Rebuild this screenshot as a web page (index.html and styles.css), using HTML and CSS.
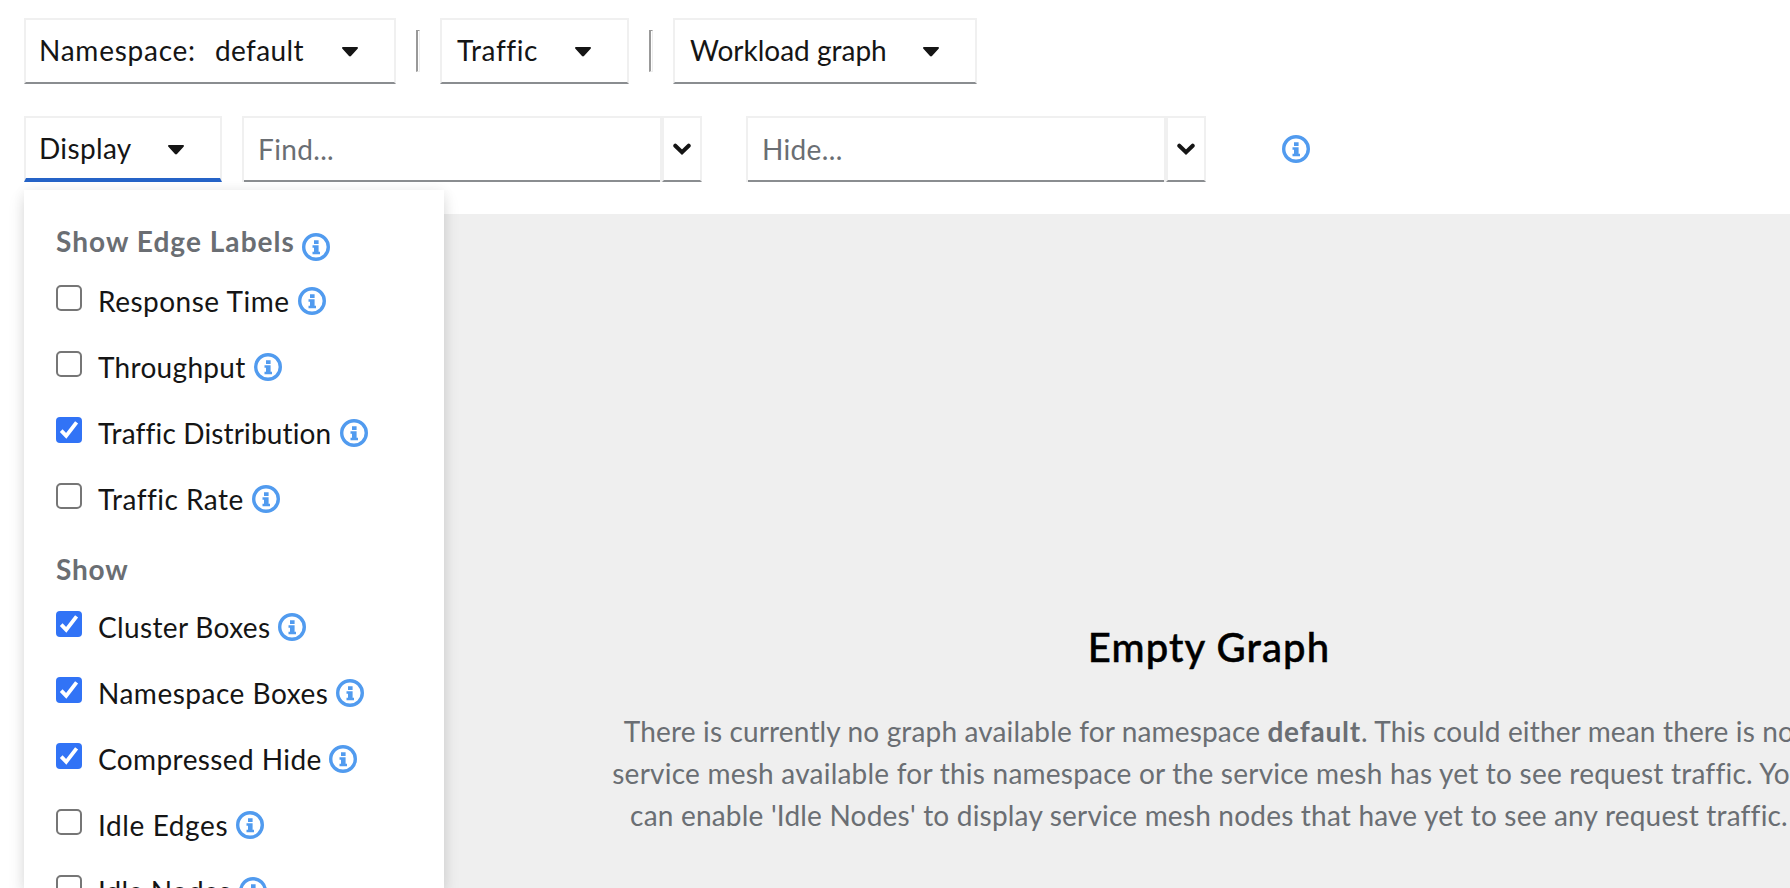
FILE: index.html
```html
<!DOCTYPE html>
<html lang="en">
<head>
<meta charset="utf-8">
<title>Graph</title>
<link rel="stylesheet" href="styles.css">
</head>
<body>
<svg class="defs" width="0" height="0">
  <symbol id="info" viewBox="0 0 28 28">
    <circle cx="14" cy="14" r="12.3" fill="none" stroke="currentColor" stroke-width="3.4"/>
    <path fill="currentColor" d="M12 7.200h4.600v3.800H12zM10.500 12.300h6.100v6.500H18v2.500h-7.500v-2.500H12v-4h-1.500z"/>
  </symbol>
  <symbol id="caret" viewBox="0 0 16 10"><path fill="currentColor" d="M1 0h14c1 0 1.300 1 .6 1.700L9 9.100c-.6.6-1.400.6-2 0L.4 1.700C-.3 1 0 0 1 0z"/></symbol>
  <symbol id="chevron" viewBox="0 0 18 12"><path fill="none" stroke="currentColor" stroke-width="4" stroke-linecap="round" d="M2.300 2.700L9 9.200l6.700-6.500"/></symbol>
</svg>
<header class="toolbar">
  <div class="row">
    <button class="select w-namespace"><span class="t-namespace">Namespace:</span><span class="t-default">default</span><svg class="caret"><use href="#caret"/></svg></button>
    <span class="divider"></span>
    <button class="select w-traffic"><span class="t-traffic">Traffic</span><svg class="caret"><use href="#caret"/></svg></button>
    <span class="divider"></span>
    <button class="select w-graph"><span class="t-graph">Workload graph</span><svg class="caret"><use href="#caret"/></svg></button>
  </div>
  <div class="row">
    <div class="dropdown">
      <button class="select open w-display"><span class="t-display">Display</span><svg class="caret"><use href="#caret"/></svg></button>
      <div class="menu">
        <div class="heading"><span class="t-edge">Show Edge Labels</span><svg class="info"><use href="#info"/></svg></div>
        <div class="options">
          <label class="option"><i class="box"></i><span class="t-response">Response Time</span><svg class="info"><use href="#info"/></svg></label>
          <label class="option"><i class="box"></i><span class="t-throughput">Throughput</span><svg class="info"><use href="#info"/></svg></label>
          <label class="option"><i class="box checked"><svg viewBox="0 0 26 26"><path d="M5.200 13.600l5 5.200L20.600 5.400"/></svg></i><span class="t-distribution">Traffic Distribution</span><svg class="info"><use href="#info"/></svg></label>
          <label class="option"><i class="box"></i><span class="t-rate">Traffic Rate</span><svg class="info"><use href="#info"/></svg></label>
        </div>
        <div class="heading second"><span class="t-show">Show</span></div>
        <div class="options">
          <label class="option"><i class="box checked"><svg viewBox="0 0 26 26"><path d="M5.200 13.600l5 5.200L20.600 5.400"/></svg></i><span class="t-cluster">Cluster Boxes</span><svg class="info"><use href="#info"/></svg></label>
          <label class="option"><i class="box checked"><svg viewBox="0 0 26 26"><path d="M5.200 13.600l5 5.200L20.600 5.400"/></svg></i><span class="t-nsboxes">Namespace Boxes</span><svg class="info"><use href="#info"/></svg></label>
          <label class="option"><i class="box checked"><svg viewBox="0 0 26 26"><path d="M5.200 13.600l5 5.200L20.600 5.400"/></svg></i><span class="t-compressed">Compressed Hide</span><svg class="info"><use href="#info"/></svg></label>
          <label class="option"><i class="box"></i><span class="t-edges">Idle Edges</span><svg class="info"><use href="#info"/></svg></label>
          <label class="option"><i class="box"></i><span class="t-nodes">Idle Nodes</span><svg class="info"><use href="#info"/></svg></label>
        </div>
      </div>
    </div>
    <div class="search find"><div class="input">Find...</div><button class="toggle"><svg class="chevron"><use href="#chevron"/></svg></button></div>
    <div class="search hide"><div class="input">Hide...</div><button class="toggle"><svg class="chevron"><use href="#chevron"/></svg></button></div>
    <svg class="info help"><use href="#info"/></svg>
  </div>
</header>
<main class="graph">
  <section class="empty">
    <h1>Empty Graph</h1>
    <p><span class="line1">There is currently no graph available for namespace <b>default</b>. This could either mean there is no</span><br><span class="line2">service mesh available for this namespace or the service mesh has yet to see request traffic. You</span><br><span class="line3">can enable 'Idle Nodes' to display service mesh nodes that have yet to see any request traffic.</span></p>
  </section>
</main>
</body>
</html>
```
FILE: styles.css
```css
* { box-sizing: border-box; }
html { height: 888px; overflow: hidden; }
body {
  margin: 0;
  height: 888px;
  overflow: hidden;
  display: flex;
  flex-direction: column;
  background: #fff;
  color: #151515;
  font: 28px/42px Lato, sans-serif;
  font-variant-ligatures: none;
}
.defs { position: absolute; }
svg { display: block; flex: none; }

.toolbar { flex: none; height: 214px; padding: 18px 24px 0; display: flex; flex-direction: column; gap: 32px; }
.row { display: flex; height: 66px; }

.select {
  height: 66px;
  padding: 0 0 2px 15px;
  display: flex;
  align-items: center;
  border: 2px solid #f0f0f0;
  border-bottom-color: #8a8d90;
  background: #fff;
  color: inherit;
  font: inherit;
  text-align: left;
  white-space: nowrap;
}
.select.open { border-bottom: 4px solid #2563c7; padding-bottom: 0; }
.caret { width: 16px; height: 10px; margin-top: 4px; }
.w-namespace { width: 372px; }
.w-traffic { width: 189px; }
.w-graph { width: 304px; }
.w-display { width: 198px; }

.divider {
  width: 4px;
  height: 42px;
  margin: 12px 20px 0;
  border: 1px solid #eee;
  border-left: 2px solid #999;
  border-top-color: #999;
}

.t-namespace { width: 176px; letter-spacing: .75px; margin-left: -2px; }
.t-default { width: 127px; letter-spacing: .4px; }
.t-traffic { width: 118px; letter-spacing: .6px; }
.t-graph { width: 233px; }
.t-display { width: 129px; letter-spacing: .35px; margin-left: -2px; }

.dropdown { position: relative; z-index: 2; }
.menu {
  position: absolute;
  left: 0;
  top: 74px;
  width: 420px;
  height: 698px;
  overflow: visible;
  padding: 29px 32px 0;
  background: #fff;
  box-shadow: 0 8px 16px rgba(3, 3, 3, .12), 0 0 12px rgba(3, 3, 3, .06);
  clip-path: inset(-20px -30px 74px -30px);
  clip-path: inset(-20px -30px 0 -30px);
}
.heading { display: flex; height: 42px; margin-bottom: 18px; color: #6a6e73; font-weight: 700; white-space: nowrap; }
.heading.second { margin: 28px 0 16px; }
.heading .info { margin-top: 14px; }
.heading span, .option span { padding-top: 1px; }
.options { display: flex; flex-direction: column; gap: 24px; }
.option { display: flex; height: 42px; white-space: nowrap; }
.info { width: 28px; height: 28px; margin-top: 8px; color: #519bef; }
.box { width: 26px; height: 26px; flex: none; margin: 6px 16px 0 0; border: 2px solid #767676; border-radius: 5px; }
.box.checked { border: 0; border-radius: 4px; background: #3173f6; }
.box path { fill: none; stroke: #fff; stroke-width: 3.8; }

.t-edge { width: 246px; letter-spacing: 1.05px; }
.t-show { letter-spacing: .8px; }
.t-response { width: 200px; letter-spacing: .5px; }
.t-throughput { width: 156px; letter-spacing: .3px; }
.t-distribution { width: 242px; letter-spacing: .15px; }
.t-rate { width: 154px; letter-spacing: .5px; }
.t-cluster { width: 180px; letter-spacing: .35px; }
.t-nsboxes { width: 238px; letter-spacing: .5px; }
.t-compressed { width: 231px; letter-spacing: .4px; }
.t-edges { width: 138px; letter-spacing: .6px; }
.t-nodes { width: 141px; letter-spacing: .2px; }

.search { display: flex; width: 460px; }
.find { margin-left: 20px; }
.hide { margin-left: 44px; }
.input {
  width: 420px;
  height: 66px;
  padding: 10px 14px;
  border: 2px solid #f0f0f0;
  border-bottom: 0;
  box-shadow: inset 0 -2px #8a8d90;
  color: #6a6e73;
  letter-spacing: .35px;
}
.toggle {
  width: 40px;
  height: 66px;
  padding: 0;
  display: flex;
  align-items: center;
  justify-content: center;
  border: 2px solid #f0f0f0;
  border-bottom-color: #8a8d90;
  background: #fff;
  color: #151515;
}
.chevron { width: 18px; height: 12px; }
.help { margin: 19px 0 0 76px; }

.graph { flex: 1; margin-left: 24px; padding: 407px 0 0 585px; background: #efefef; }
.empty { width: 1200px; text-align: center; white-space: nowrap; }
h1 { margin: 0; color: #000; font: 500 40px/52px Lato, sans-serif; letter-spacing: 1.1px; -webkit-text-stroke: .5px #000; }
p { margin: 37px 0 0; color: #6a6e73; }
p b { letter-spacing: .8px; }
.line1 { letter-spacing: .15px; }
.line2 { letter-spacing: .23px; }
.line3 { letter-spacing: .2px; }
```
